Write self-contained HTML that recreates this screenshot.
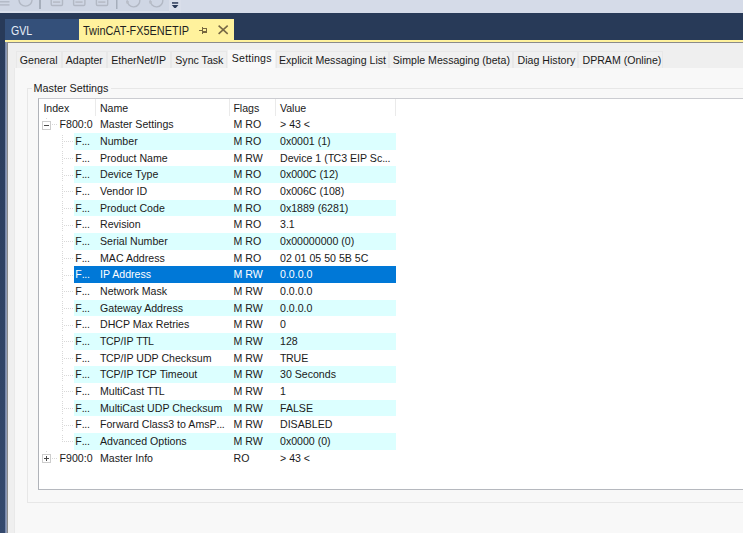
<!DOCTYPE html>
<html><head><meta charset="utf-8">
<style>
*{box-sizing:border-box}
html,body{margin:0;padding:0}
body{width:743px;height:533px;overflow:hidden;position:relative;background:#f8f8f8;font-family:"Liberation Sans",sans-serif;}
.a{position:absolute}
#tb{left:0;top:0;width:743px;height:13px;background:#d5dbe8}
#tbband{left:0;top:0;width:169px;height:13px;background:linear-gradient(#cfd6e4 0 11px,#dce1ec 11px)}
#navy{left:0;top:13px;width:743px;height:27px;background:#283a58}
#gvl{left:5px;top:19px;width:74px;height:21px;background:#34507a;color:#e8eef8;font-size:12.3px}
#gvl span{position:absolute;left:6px;top:4.8px;transform:scaleX(0.86);transform-origin:0 0;white-space:nowrap}
#act{left:79px;top:19px;width:155px;height:21px;background:#fff29d;color:#1e1e1e;font-size:12.3px}
#act span{position:absolute;left:4px;top:4.8px;transform:scaleX(0.888);transform-origin:0 0;white-space:nowrap}
#yl{left:5px;top:40px;width:738px;height:2px;background:#fff29d}
#lstrip{left:0;top:40px;width:5px;height:493px;background:linear-gradient(#293b5b,#34496d)}
#lb1{left:5px;top:42px;width:2px;height:491px;background:linear-gradient(90deg,#7787aa 50%,#8f9bb5 50%)}
#lb2{left:7px;top:42px;width:1px;height:491px;background:#8a8a8a}
#tline{left:7px;top:42px;width:736px;height:1px;background:#8a8a8a}
#outer{left:8px;top:43px;width:735px;height:490px;background:#efefef}
#panel{left:15px;top:68px;width:728px;height:465px;background:#f8f8f8}
#panelb{left:14px;top:68px;width:1px;height:465px;background:#e9e9e9}
.tab{position:absolute;top:51px;height:17px;background:#f0f0f0;border:1px solid #e8e8e8;border-bottom:none;font-size:10.6px;color:#1a1a1a;line-height:15px;padding-top:1px;padding-left:3.3px;white-space:nowrap}
.tab.sel{top:49px;height:19px;background:#f9f9f9;border-color:#f0f0f0;z-index:2;line-height:14px;padding-top:1px}
#gb{left:27px;top:88px;width:760px;height:415px;border:1px solid #e7e7e7}
#gbl{left:32px;top:81.8px;width:79px;height:12px;background:#f8f8f8;font-size:10.8px;color:#1a1a1a;line-height:12px;padding-left:1.5px}
#lv{left:38px;top:98px;width:720px;height:392px;background:#fff;border:1px solid #b0b3b9;border-top-color:#cbccd1;border-bottom-color:#b5b8be;border-right:none}
.hsep{position:absolute;top:99px;width:1px;height:17px;background:#eaeaea}
.ht{position:absolute;top:101px;margin-left:0.4px;font-size:10.6px;color:#1a1a1a;line-height:14px;white-space:nowrap}
.row{position:absolute;left:39px;width:357px;height:16.6667px;font-size:10.6px;color:#1a1a1a;line-height:16.6667px;white-space:nowrap}
.row.alt::before,.row.sel::before{content:"";position:absolute;left:35px;top:0;right:0;bottom:0;background:#dcffff}
.row.sel::before{background:#0078d7}
.row.sel .t{color:#fff}
.t{position:absolute;top:0}
.exp{position:absolute;left:3px;top:4.2px;width:9px;height:9px;border:1px solid #cdcdcd;background:#fff}
.exp .h{position:absolute;left:1px;top:3px;width:5px;height:1px;background:#4a4a4a}
.exp .v{position:absolute;left:3px;top:1px;width:1px;height:5px;background:#4a4a4a}
.rd{position:absolute;left:7px;top:1.7px;width:1px;height:1px;background:#d8d8d8}
.hd1{position:absolute;left:13px;top:8px;width:6px;height:1px;background:repeating-linear-gradient(90deg,#d8d8d8 0 1px,transparent 1px 2px)}
.vl{position:absolute;left:23px;top:1.5px;width:1px;height:14px;background:repeating-linear-gradient(180deg,#d8d8d8 0 1px,transparent 1px 2px)}
.hl{position:absolute;left:25px;top:8.3px;width:9px;height:1px;background:repeating-linear-gradient(90deg,#d8d8d8 0 1px,transparent 1px 2px)}
svg{position:absolute}
b{font-weight:normal}
.T{letter-spacing:-0.6px}
.el{letter-spacing:-0.35px}
</style></head><body>
<div class="a" id="tb"></div>
<div class="a" id="tbband"></div>
<svg style="left:0;top:0" width="743" height="13" viewBox="0 0 743 13">
 <g fill="none" stroke="#b2b8c4" stroke-width="1.4">
  <line x1="0" y1="1.8" x2="9.5" y2="1.8"/><line x1="0" y1="4.9" x2="9.5" y2="4.9"/>
  <circle cx="25.5" cy="-0.5" r="6.6"/>
  <rect x="51.2" y="-4" width="11.3" height="9.5" rx="1.2"/>
  <rect x="73.6" y="-4" width="11.3" height="9.5" rx="1.2"/>
  <rect x="96.4" y="-4" width="11.3" height="9.5" rx="1.2"/>
  <path d="M127.2 0.3 A6.3 6.3 0 1 0 139.7 -0.5"/>
  <path d="M150.2 0.3 A6.3 6.3 0 1 0 162.7 -0.5"/>
 </g>
 <g fill="#b7bcc7">
  <rect x="53" y="1.3" width="7.2" height="1.6"/>
  <rect x="75.4" y="1.3" width="7.2" height="1.6"/>
  <rect x="98.2" y="1.3" width="7.2" height="1.6"/>
 </g>
 <path d="M126 1 L129 1.2 L128.6 4.2 L126.4 3.4 Z" fill="#b9bec9"/>
 <path d="M149 1 L152 1.2 L151.6 4.2 L149.4 3.4 Z" fill="#b9bec9"/>
 <rect x="39" y="0" width="2" height="9" fill="#a6aebb"/>
 <rect x="116" y="0" width="1.5" height="9" fill="#a6aebb"/>
 <rect x="169" y="0" width="12" height="13" fill="#d9deea"/>
 <rect x="172" y="2.2" width="6.2" height="1.5" fill="#2b3a58"/>
 <path d="M171.8 5 L178.4 5 L175.8 7.9 L174.4 7.9 Z" fill="#2b3a58"/>
</svg>
<div class="a" id="navy"></div>
<div class="a" id="gvl"><span>GVL</span></div>
<div class="a" id="act"><span>TwinCAT-FX5ENETIP</span></div>
<svg style="left:196px;top:22px" width="40" height="16" viewBox="0 0 40 16">
 <g fill="#76673f">
  <rect x="3" y="8" width="3" height="1"/>
  <rect x="6" y="5" width="1" height="7"/>
  <rect x="6" y="6" width="5" height="1"/>
  <rect x="10" y="6" width="1" height="5"/>
  <rect x="6" y="9" width="5" height="2"/>
 </g>
 <g stroke="#776845" fill="none" stroke-width="1.55">
  <line x1="22.6" y1="3.7" x2="31.7" y2="11.8"/>
  <line x1="31.7" y1="3.7" x2="22.6" y2="11.8"/>
 </g>
</svg>
<div class="a" id="yl"></div>
<div class="a" id="lstrip"></div>
<div class="a" id="outer"></div>
<div class="a" id="lb1"></div>
<div class="a" id="lb2"></div>
<div class="a" id="tline"></div>
<div class="a" id="panel"></div>
<div class="a" id="panelb"></div>
<div class="tab" style="left:15.5px;width:46.0px">General</div>
<div class="tab" style="left:61.5px;width:45.5px">Adapter</div>
<div class="tab" style="left:107px;width:64.0px">EtherNet/IP</div>
<div class="tab" style="left:171px;width:55.5px">Sync Task</div>
<div class="tab sel" style="left:226.5px;width:49.0px;letter-spacing:0.2px;padding-left:4.3px">Settings</div>
<div class="tab" style="left:275.5px;width:113.0px ;padding-left:2.4px">Explicit Messaging List</div>
<div class="tab" style="left:388.5px;width:124.8px">Simple Messaging (beta)</div>
<div class="tab" style="left:513.3px;width:64.9px">Diag History</div>
<div class="tab" style="left:578.2px;width:84.6px">DPRAM (Online)</div>
<div class="a" id="gb"></div>
<div class="a" id="gbl">Master Settings</div>
<div class="a" id="lv"></div>
<div class="hsep" style="left:95px"></div>
<div class="hsep" style="left:229px"></div>
<div class="hsep" style="left:275px"></div>
<div class="hsep" style="left:395px"></div>
<span class="ht" style="left:43px">Index</span>
<span class="ht" style="left:99.5px">Name</span>
<span class="ht" style="left:233px">Flags</span>
<span class="ht" style="left:279.5px">Value</span>
<div class="row" style="top:116.33px">
<div class="exp"><i class="h"></i></div><div class="rd"></div><div class="hd1"></div>
<span class="t" style="left:20.6px">F800:0</span>
<span class="t" style="left:61px">Master Settings</span>
<span class="t" style="left:194.5px">M RO</span>
<span class="t" style="left:241px">&gt; 43 &lt;</span>
</div>
<div class="row alt" style="top:133.00px">
<div class="vl"></div><div class="hl"></div>
<span class="t" style="left:36.3px">F<b class="el">...</b></span>
<span class="t" style="left:61px">Number</span>
<span class="t" style="left:194.5px">M RO</span>
<span class="t" style="left:241px">0x0001 (1)</span>
</div>
<div class="row" style="top:149.66px">
<div class="vl"></div><div class="hl"></div>
<span class="t" style="left:36.3px">F<b class="el">...</b></span>
<span class="t" style="left:61px">Product Name</span>
<span class="t" style="left:194.5px">M RW</span>
<span class="t" style="left:241px">Device 1 (<b class="T">T</b>C3 EIP Sc<b class="el">...</b></span>
</div>
<div class="row alt" style="top:166.33px">
<div class="vl"></div><div class="hl"></div>
<span class="t" style="left:36.3px">F<b class="el">...</b></span>
<span class="t" style="left:61px">Device <b class="T">T</b>ype</span>
<span class="t" style="left:194.5px">M RO</span>
<span class="t" style="left:241px">0x000C (12)</span>
</div>
<div class="row" style="top:183.00px">
<div class="vl"></div><div class="hl"></div>
<span class="t" style="left:36.3px">F<b class="el">...</b></span>
<span class="t" style="left:61px">Vendor ID</span>
<span class="t" style="left:194.5px">M RO</span>
<span class="t" style="left:241px">0x006C (108)</span>
</div>
<div class="row alt" style="top:199.66px">
<div class="vl"></div><div class="hl"></div>
<span class="t" style="left:36.3px">F<b class="el">...</b></span>
<span class="t" style="left:61px">Product Code</span>
<span class="t" style="left:194.5px">M RO</span>
<span class="t" style="left:241px">0x1889 (6281)</span>
</div>
<div class="row" style="top:216.33px">
<div class="vl"></div><div class="hl"></div>
<span class="t" style="left:36.3px">F<b class="el">...</b></span>
<span class="t" style="left:61px">Revision</span>
<span class="t" style="left:194.5px">M RO</span>
<span class="t" style="left:241px">3.1</span>
</div>
<div class="row alt" style="top:233.00px">
<div class="vl"></div><div class="hl"></div>
<span class="t" style="left:36.3px">F<b class="el">...</b></span>
<span class="t" style="left:61px">Serial Number</span>
<span class="t" style="left:194.5px">M RO</span>
<span class="t" style="left:241px">0x00000000 (0)</span>
</div>
<div class="row" style="top:249.66px">
<div class="vl"></div><div class="hl"></div>
<span class="t" style="left:36.3px">F<b class="el">...</b></span>
<span class="t" style="left:61px">MAC Address</span>
<span class="t" style="left:194.5px">M RO</span>
<span class="t" style="left:241px">02 01 05 50 5B 5C</span>
</div>
<div class="row sel" style="top:266.33px">
<div class="vl"></div><div class="hl"></div>
<span class="t" style="left:36.3px">F<b class="el">...</b></span>
<span class="t" style="left:61px">IP Address</span>
<span class="t" style="left:194.5px">M RW</span>
<span class="t" style="left:241px">0.0.0.0</span>
</div>
<div class="row" style="top:283.00px">
<div class="vl"></div><div class="hl"></div>
<span class="t" style="left:36.3px">F<b class="el">...</b></span>
<span class="t" style="left:61px">Network Mask</span>
<span class="t" style="left:194.5px">M RW</span>
<span class="t" style="left:241px">0.0.0.0</span>
</div>
<div class="row alt" style="top:299.66px">
<div class="vl"></div><div class="hl"></div>
<span class="t" style="left:36.3px">F<b class="el">...</b></span>
<span class="t" style="left:61px">Gateway Address</span>
<span class="t" style="left:194.5px">M RW</span>
<span class="t" style="left:241px">0.0.0.0</span>
</div>
<div class="row" style="top:316.33px">
<div class="vl"></div><div class="hl"></div>
<span class="t" style="left:36.3px">F<b class="el">...</b></span>
<span class="t" style="left:61px">DHCP Max Retries</span>
<span class="t" style="left:194.5px">M RW</span>
<span class="t" style="left:241px">0</span>
</div>
<div class="row alt" style="top:333.00px">
<div class="vl"></div><div class="hl"></div>
<span class="t" style="left:36.3px">F<b class="el">...</b></span>
<span class="t" style="left:61px"><b class="T">T</b>CP/IP <b class="T">T</b><b class="T">T</b>L</span>
<span class="t" style="left:194.5px">M RW</span>
<span class="t" style="left:241px">128</span>
</div>
<div class="row" style="top:349.66px">
<div class="vl"></div><div class="hl"></div>
<span class="t" style="left:36.3px">F<b class="el">...</b></span>
<span class="t" style="left:61px"><b class="T">T</b>CP/IP UDP Checksum</span>
<span class="t" style="left:194.5px">M RW</span>
<span class="t" style="left:241px"><b class="T">T</b>RUE</span>
</div>
<div class="row alt" style="top:366.33px">
<div class="vl"></div><div class="hl"></div>
<span class="t" style="left:36.3px">F<b class="el">...</b></span>
<span class="t" style="left:61px"><b class="T">T</b>CP/IP <b class="T">T</b>CP <b class="T">T</b>imeout</span>
<span class="t" style="left:194.5px">M RW</span>
<span class="t" style="left:241px">30 Seconds</span>
</div>
<div class="row" style="top:383.00px">
<div class="vl"></div><div class="hl"></div>
<span class="t" style="left:36.3px">F<b class="el">...</b></span>
<span class="t" style="left:61px">MultiCast <b class="T">T</b><b class="T">T</b>L</span>
<span class="t" style="left:194.5px">M RW</span>
<span class="t" style="left:241px">1</span>
</div>
<div class="row alt" style="top:399.66px">
<div class="vl"></div><div class="hl"></div>
<span class="t" style="left:36.3px">F<b class="el">...</b></span>
<span class="t" style="left:61px">MultiCast UDP Checksum</span>
<span class="t" style="left:194.5px">M RW</span>
<span class="t" style="left:241px">FALSE</span>
</div>
<div class="row" style="top:416.33px">
<div class="vl"></div><div class="hl"></div>
<span class="t" style="left:36.3px">F<b class="el">...</b></span>
<span class="t" style="left:61px">Forward Class3 to AmsP<b class="el">...</b></span>
<span class="t" style="left:194.5px">M RW</span>
<span class="t" style="left:241px">DISABLED</span>
</div>
<div class="row alt" style="top:433.00px">
<div class="vl" style="height:8px"></div><div class="hl"></div>
<span class="t" style="left:36.3px">F<b class="el">...</b></span>
<span class="t" style="left:61px">Advanced Options</span>
<span class="t" style="left:194.5px">M RW</span>
<span class="t" style="left:241px">0x0000 (0)</span>
</div>
<div class="row" style="top:449.66px">
<div class="exp"><i class="h"></i><i class="v"></i></div><div class="rd"></div><div class="hd1"></div>
<span class="t" style="left:20.6px">F900:0</span>
<span class="t" style="left:61px">Master Info</span>
<span class="t" style="left:194.5px">RO</span>
<span class="t" style="left:241px">&gt; 43 &lt;</span>
</div>
</body></html>
